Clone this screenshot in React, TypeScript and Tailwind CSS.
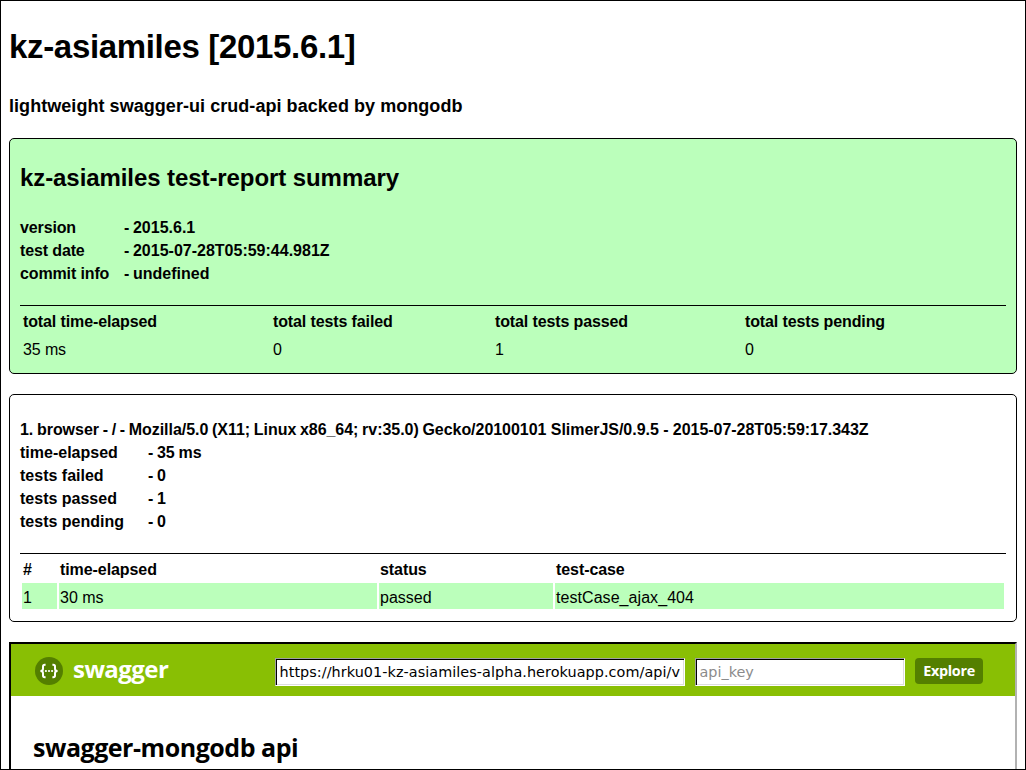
import type { ReactNode } from "react";

function Info({ rows, label }: { rows: [string, string][]; label: string }) {
  return (
    <div>
      {rows.map(([k, v]) => (
        <div key={k} className="flex h-[23px] whitespace-pre">
          <span className={label}>{k}</span>
          <span className="[word-spacing:-0.8px]">{v}</span>
        </div>
      ))}
    </div>
  );
}

function Panel({ className, children }: { className: string; children: ReactNode }) {
  return <section className={`rounded-[5px] border border-black px-[10px] ${className}`}>{children}</section>;
}

function SwaggerLogo() {
  return (
    <svg width="28" height="28" viewBox="0 0 28 28" className="-mt-px shrink-0">
      <circle cx="14" cy="14" r="14" fill="#547f00" />
      <g fill="none" stroke="#fff" strokeWidth="2">
        <path d="M10.6 7.8H9.8Q8 7.8 8 9.5V11.7Q8 14 5.4 14Q8 14 8 16.3V18.5Q8 20.2 9.8 20.2H10.6" />
        <path d="M17.4 7.8H18.2Q20 7.8 20 9.5V11.7Q20 14 22.6 14Q20 14 20 16.3V18.5Q20 20.2 18.2 20.2H17.4" />
      </g>
      <g fill="#fff">
        <circle cx="10.9" cy="14" r="1.1" />
        <circle cx="14" cy="14" r="1.1" />
        <circle cx="17.1" cy="14" r="1.1" />
      </g>
    </svg>
  );
}

const field =
  "h-7 border border-t-[#a0a0a0] border-l-[#a0a0a0] border-r-white border-b-white bg-white pl-[3.5px] pr-1 text-[14.4px] font-['DejaVu_Sans',sans-serif] shadow-[inset_1px_1px_0_#000,inset_-1px_-1px_0_#ddd] outline-none placeholder:text-[#8b8b8b]";

export default function App() {
  return (
    <div className="h-[770px] w-[1026px] overflow-hidden border border-black bg-white px-2 font-['Liberation_Sans',Arial,sans-serif] text-[16px] leading-[23px] text-black">
      <h1 className="mt-[26px] h-10 text-[33px] leading-[39px] font-bold tracking-[-0.33px]">kz-asiamiles [2015.6.1]</h1>
      <h3 className="mt-[27px] h-6 text-[18px] leading-6 font-bold tracking-[0.05px]">lightweight swagger-ui crud-api backed by mongodb</h3>

      <Panel className="mt-5 h-[236px] bg-[#bfb]">
        <h2 className="mt-[23px] h-8 text-[24px] leading-8 font-bold tracking-[-0.08px]">kz-asiamiles test-report summary</h2>
        <div className="mt-[22px] font-bold">
          <Info
            label="w-[104px] tracking-[-0.13px]"
            rows={[
              ["version", "- 2015.6.1"],
              ["test date", "- 2015-07-28T05:59:44.981Z"],
              ["commit info", "- undefined"],
            ]}
          />
        </div>
        <div className="mt-5 grid grid-cols-[250px_222px_250px_1fr] gap-y-[5px] border-t border-black pt-1 pl-[3px] *:tracking-[-0.12px]">
          <b>total time-elapsed</b>
          <b>total tests failed</b>
          <b>total tests passed</b>
          <b>total tests pending</b>
          <span>35 ms</span>
          <span>0</span>
          <span>1</span>
          <span>0</span>
        </div>
      </Panel>

      <Panel className="mt-5 h-[228px]">
        <div className="mt-[23px] font-bold">
          <div className="whitespace-nowrap">
            <span className="[word-spacing:-0.7px] tracking-[-0.04px]">1. browser - / - Mozilla/5.0 (X11; Linux x86_64; rv:35.0) </span>
            <span className="tracking-[-0.04px]">Gecko/20100101 SlimerJS/0.9.5 - 2015-07-28T05:59:17.343Z</span>
          </div>
          <Info
            label="w-32"
            rows={[
              ["time-elapsed", "- 35 ms"],
              ["tests failed", "- 0"],
              ["tests passed", "- 1"],
              ["tests pending", "- 0"],
            ]}
          />
        </div>
        <div className="mt-5 border-t border-black px-[2px] pt-1">
          <div className="grid h-[25px] grid-cols-[35px_318px_174px_1fr] gap-x-[2px] pl-px font-bold tracking-[-0.08px]">
            <span>#</span>
            <span>time-elapsed</span>
            <span>status</span>
            <span>test-case</span>
          </div>
          <div className="grid grid-cols-[35px_318px_174px_1fr] gap-x-[2px] *:h-[26px] *:bg-[#bfb] *:pt-[3px] *:pl-px">
            <span>1</span>
            <span>30 ms</span>
            <span>passed</span>
            <span className="tracking-[0.06px]">testCase_ajax_404</span>
          </div>
        </div>
      </Panel>

      <section className="mt-5 h-[200px] border-2 border-t-black border-r-[#b2b2b2] border-l-black font-['Open_Sans','Noto_Sans',sans-serif]">
        <header className="flex h-[52px] items-start bg-[#89bf04] pt-[14px] pl-6">
          <SwaggerLogo />
          <span className="-mt-[5px] ml-[10px] w-[203px] text-[24px] leading-8 font-bold tracking-[-0.55px] text-white">swagger</span>
          <input className={`${field} -ml-px w-[410px] tracking-[0.06px]`} defaultValue="https://hrku01-kz-asiamiles-alpha.herokuapp.com/api/v0/swagger.json" />
          <input className={`${field} ml-[10px] w-[210px]`} placeholder="api_key" />
          <button className="ml-[10px] h-[26px] w-[68px] rounded bg-[#547f00] text-[14.4px] leading-[26px] font-bold tracking-[-0.3px] text-white">Explore</button>
        </header>
        <h2 className="mt-[35px] ml-[22px] text-[25px] leading-8 font-bold tracking-[-0.47px]">swagger-mongodb api</h2>
      </section>
    </div>
  );
}
